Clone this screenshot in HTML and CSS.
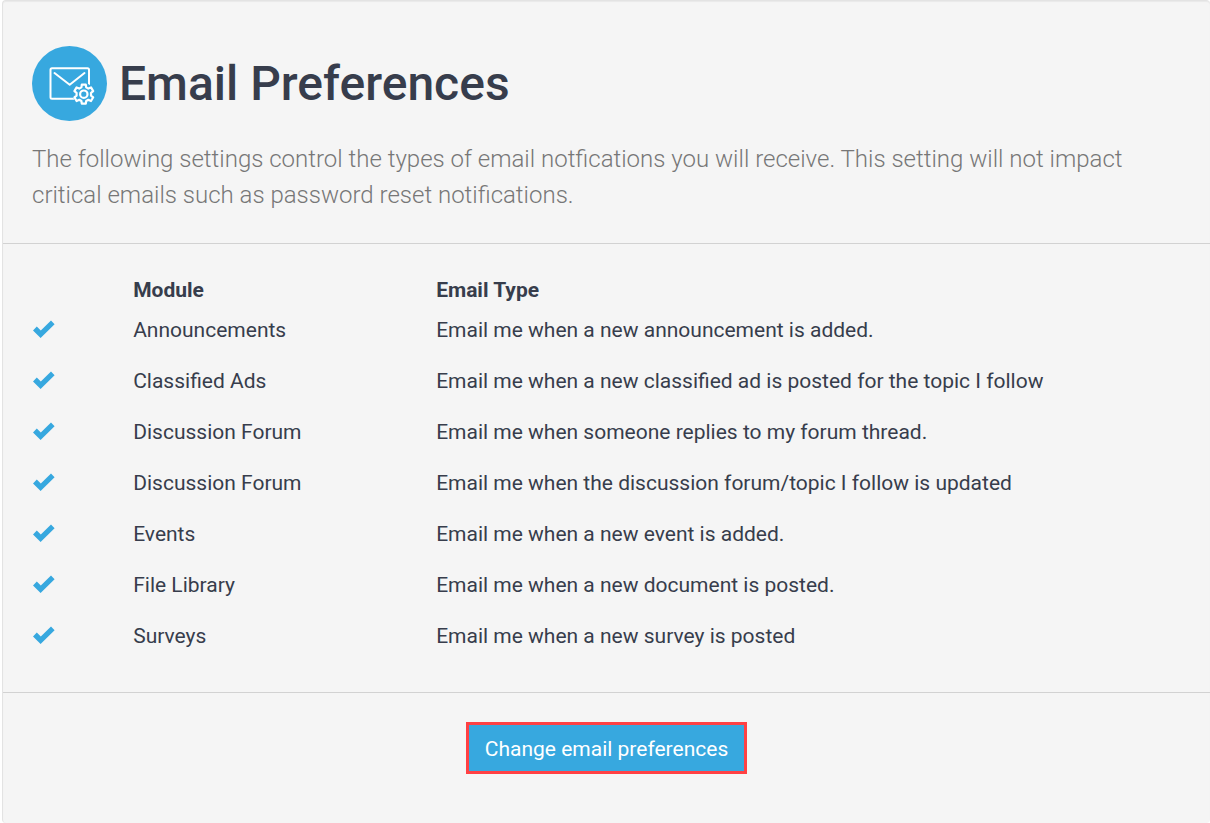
FILE: index.html
```
<!DOCTYPE html>
<html lang="en">
<head>
    <meta charset="UTF-8">
    <meta name="viewport" content="width=device-width, initial-scale=1.0">
    <title>Email Preferences</title>
    <link rel="stylesheet" href="styles.css">
</head>
<body>
    <!-- Shared tick symbol for the table rows -->
    <svg class="symbols" aria-hidden="true">
        <symbol id="tick" viewBox="0 0 22 18">
            <path fill="currentColor" d="M0 10.5 L3.8 6.6 L7.8 10.5 L18 .5 L21.6 4.2 L7.6 18 Z"/>
        </symbol>
    </svg>

    <main class="panel">
        <header class="panel-header">
            <div class="title">
                <svg class="title-icon" viewBox="0 0 75 75" aria-hidden="true">
                    <circle cx="37.5" cy="37.5" r="37.5" fill="#37a8df"/>
                    <g fill="none" stroke="#fff" stroke-width="2" stroke-linecap="round" stroke-linejoin="round">
                        <rect x="18.5" y="22.3" width="38.5" height="30.4" rx="1.5"/>
                        <path d="M22.5 27 L37.7 38.7 L52.5 27"/>
                    </g>
                    <circle cx="51.8" cy="48.2" r="11" fill="#37a8df"/>
                    <g transform="translate(51.8 48.2)" fill="none" stroke="#fff" stroke-width="2.2" stroke-linejoin="round">
                        <path d="M-2 -9.5 H2 L2.4 -6.8 L4.5 -5.6 L7.2 -6.8 L9.4 -3.1 L7.2 -1.4 V1.4 L9.4 3.1 L7.2 6.8 L4.5 5.6 L2.4 6.8 L2 9.5 H-2 L-2.4 6.8 L-4.5 5.6 L-7.2 6.8 L-9.4 3.1 L-7.2 1.4 V-1.4 L-9.4 -3.1 L-7.2 -6.8 L-4.5 -5.6 L-2.4 -6.8 Z"/>
                        <circle r="3.7"/>
                    </g>
                </svg>
                <h1>Email Preferences</h1>
            </div>
            <p class="intro">The following settings control the types of email notfications you will receive. This setting will not impact critical emails such as password reset notifications.</p>
        </header>

        <section class="panel-body">
            <table class="preferences">
                <colgroup>
                    <col class="col-status">
                    <col class="col-module">
                    <col>
                </colgroup>
                <thead>
                    <tr>
                        <td></td>
                        <th scope="col">Module</th>
                        <th scope="col">Email Type</th>
                    </tr>
                </thead>
                <tbody>
                    <tr>
                        <td><svg class="tick" role="img" aria-label="On"><use href="#tick"/></svg></td>
                        <td>Announcements</td>
                        <td>Email me when a new announcement is added.</td>
                    </tr>
                    <tr>
                        <td><svg class="tick" role="img" aria-label="On"><use href="#tick"/></svg></td>
                        <td>Classified Ads</td>
                        <td>Email me when a new classified ad is posted for the topic I follow</td>
                    </tr>
                    <tr>
                        <td><svg class="tick" role="img" aria-label="On"><use href="#tick"/></svg></td>
                        <td>Discussion Forum</td>
                        <td>Email me when someone replies to my forum thread.</td>
                    </tr>
                    <tr>
                        <td><svg class="tick" role="img" aria-label="On"><use href="#tick"/></svg></td>
                        <td>Discussion Forum</td>
                        <td>Email me when the discussion forum/topic I follow is updated</td>
                    </tr>
                    <tr>
                        <td><svg class="tick" role="img" aria-label="On"><use href="#tick"/></svg></td>
                        <td>Events</td>
                        <td>Email me when a new event is added.</td>
                    </tr>
                    <tr>
                        <td><svg class="tick" role="img" aria-label="On"><use href="#tick"/></svg></td>
                        <td>File Library</td>
                        <td>Email me when a new document is posted.</td>
                    </tr>
                    <tr>
                        <td><svg class="tick" role="img" aria-label="On"><use href="#tick"/></svg></td>
                        <td>Surveys</td>
                        <td>Email me when a new survey is posted</td>
                    </tr>
                </tbody>
            </table>
        </section>

        <footer class="panel-footer">
            <button type="button" class="btn">Change email preferences</button>
        </footer>
    </main>
</body>
</html>
```
FILE: styles.css
```
:root {
    --primary: #37a8df;
    --highlight: #ff4144;
    --text: #373d4c;
    --panel: #f5f5f5;
    --line: #d2d2d2;
}

* {
    box-sizing: border-box;
}

body {
    margin: 0;
    padding-left: 2px;
    background: #fff;
    color: var(--text);
    font-family: Roboto, sans-serif;
    font-size: 21px;
    line-height: 30px;
}

.symbols {
    display: none;
}

.panel {
    min-height: 100vh;
    background: var(--panel);
    border: 1px solid #e3e3e3;
    border-width: 1px 0 0 1px;
    border-radius: 4px;
    box-shadow: inset 0 1px 1px rgba(0, 0, 0, 0.05);
}

.panel-header {
    padding: 45px 29px 30px;
    border-bottom: 1px solid var(--line);
}

.title {
    display: flex;
    align-items: center;
    gap: 12px;
}

.title-icon {
    flex: none;
    width: 75px;
    height: 75px;
}

h1 {
    margin: 0;
    font-size: 48px;
    font-weight: 500;
    line-height: 56px;
}

.intro {
    margin: 20px 0 0;
    color: #777;
    font-size: 24px;
    font-weight: 300;
    line-height: 36px;
}

.panel-body {
    padding: 31px 0 29px;
    border-bottom: 1px solid var(--line);
}

.preferences {
    width: 100%;
    table-layout: fixed;
    border-collapse: collapse;
}

.col-status {
    width: 8.3%;
}

.col-module {
    width: 25.1%;
}

.preferences th,
.preferences td {
    padding: 0 0 0 30px;
    text-align: left;
    vertical-align: top;
}

.preferences th {
    padding-bottom: 10px;
    font-weight: 700;
}

.preferences tbody td {
    padding-bottom: 21px;
}

.preferences tbody tr:last-child td {
    padding-bottom: 12px;
}

.tick {
    display: block;
    width: 22px;
    height: 18px;
    margin-top: 5px;
    color: var(--primary);
}

.panel-footer {
    padding: 29px 30px;
    text-align: center;
}

.btn {
    padding: 9px 16px 7px;
    background: var(--primary);
    border: 3px solid var(--highlight);
    color: #fff;
    font: inherit;
    cursor: pointer;
}

.btn:hover {
    background: #2597ce;
}
```
